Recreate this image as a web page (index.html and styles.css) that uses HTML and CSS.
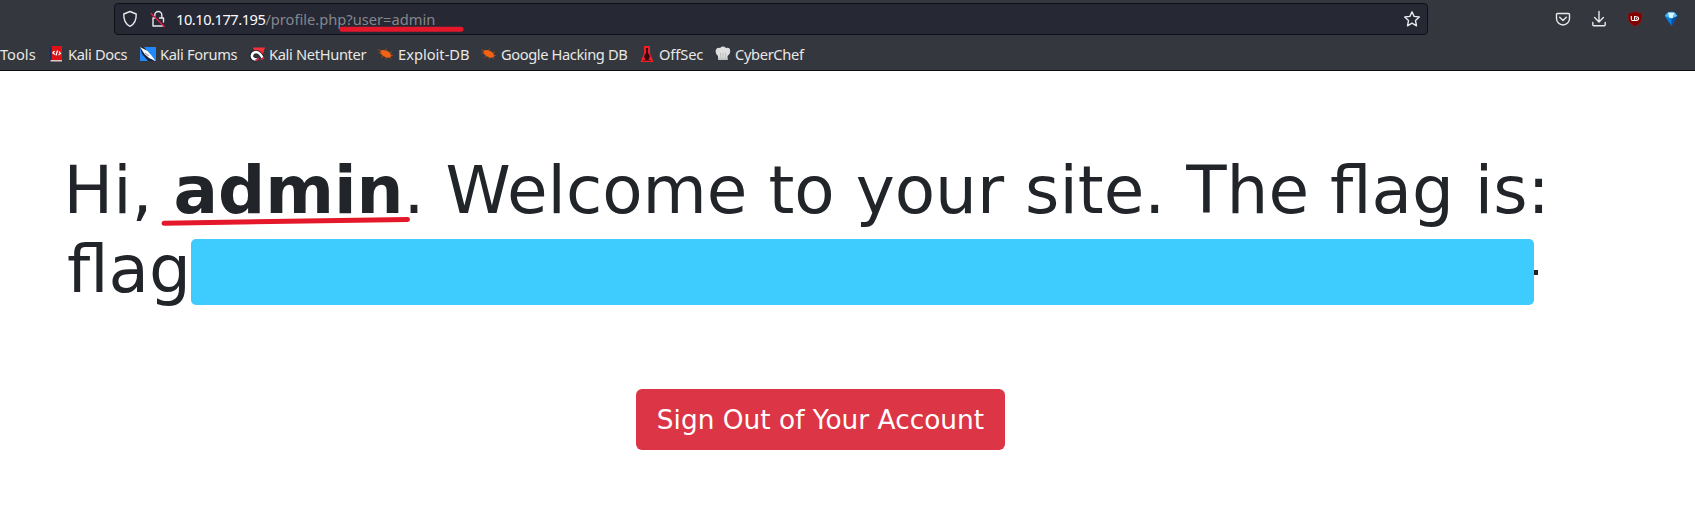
FILE: index.html
```html
<!DOCTYPE html>
<html lang="en">
<head>
<meta charset="utf-8">
<title>Profile</title>
<link rel="stylesheet" href="styles.css">
</head>
<body>
<header class="chrome">
  <div class="toolbar">
    <div class="address">
      <svg class="ic shield" viewBox="0 0 16 18" width="16" height="18"><path d="M8 1.5 L14.2 4 C14.4 9.5 13 14 8 16.3 C3 14 1.6 9.5 1.8 4 Z"/></svg>
      <svg class="ic lock" viewBox="0 0 16 18" width="16" height="18"><path d="M4.800 6V5a3.500 3.500 0 0 1 7 0v3M9.500 8h4v4M5 8H3v8h9.500"/><path class="slash" d="M1.2 3.500 L14.2 16.500"/></svg>
      <span class="url"><span class="host">10.10.177.195</span>/profile.php?user=admin<svg class="url-mark" width="126" height="7" viewBox="0 0 126 7"><path d="M3 3.3H122"/></svg></span>
      <svg class="ic star" viewBox="0 0 18 18" width="18" height="18"><path d="M9 1.8 L11.1 6.4 L16.300 7 L12.500 10.600 L13.500 15.800 L9 13.200 L4.500 15.800 L5.500 10.600 L1.700 7 L6.900 6.400 Z"/></svg>
    </div>
    <div class="actions">
      <svg class="ic" viewBox="0 0 16 18" width="16" height="18"><path d="M2.500 3.500h11a1 1 0 0 1 1 1v4a6.500 6.500 0 0 1-13 0v-4a1 1 0 0 1 1-1zM4.700 7.300L8 10.500l3.300-3.200"/></svg>
      <svg class="ic" viewBox="0 0 16 18" width="16" height="18"><path d="M8 1.500v10.300M3.600 7.500L8 11.900l4.400-4.400M1.800 12.500v2.200q0 1 1 1h10.400q1 0 1-1v-2.200"/></svg>
      <svg viewBox="0 0 16 18" width="16" height="18"><path d="M8 1.200Q11 3.300 15 3.300V9Q14.500 13.500 8 16.500Q1.500 13.500 1 9V3.300Q5 3.300 8 1.200Z" fill="#800000" stroke="#70292f" stroke-width=".7"/><path d="M4.300 6V9.100Q4.300 10.500 5.600 10.500H7.600V6M7.600 6.700H9.200Q11.600 6.700 11.600 8.600Q11.600 10.500 9.200 10.500H7.600M9 8.600h.9" fill="none" stroke="#fff" stroke-width="1.100"/></svg>
      <svg viewBox="0 0 16 18" width="16" height="18"><path d="M4.500 2.500L8 1.500L12 2.500L14.300 6L8.500 16L1.800 6Z" fill="#087fe8"/><path d="M1.800 6L4.500 2.500L6 7.500Z" fill="#38b9fc"/><path d="M5 2.500H11.500L9.500 8.500L6 7.500Z" fill="#e0f6ff"/><path d="M11.500 2.500L14.300 6L10 8Z" fill="#68c6fb"/><path d="M8.500 9L14.300 6L8.500 16Z" fill="#004e9d"/></svg>
    </div>
  </div>
  <nav class="bookmarks">
    <span class="bm tools">Tools</span>
    <span class="bm docs"><svg viewBox="0 0 16 16" width="16" height="16"><path d="M2 1h2v14H2z" fill="#152b58"/><path d="M3.500 0H14v14H3.500z" fill="#df1115"/><path d="M2.500 14h11.500v1.500H2.500z" fill="#e5c7c8"/><path d="M6.500 5L4.800 7L7 8.500M11 5.500L12.500 7.500L10.500 9M9.500 4.500L8 9.500" stroke="#fff" stroke-width="1.200" fill="none"/></svg>Kali Docs</span>
    <span class="bm forums"><svg viewBox="0 0 16 16" width="16" height="16"><path d="M0 1h16v14H0z" fill="#2088fa"/><path d="M0 1L4 1L14 15H8L2 8Z" fill="#17233d"/><path d="M0 1L7.500 5L11.500 9.500L15.500 15L9 12L4.500 8Z" fill="#fff"/><path d="M5 7L9 10" stroke="#88929e"/></svg>Kali Forums</span>
    <span class="bm hunter"><svg viewBox="0 0 16 16" width="16" height="16"><path d="M4 1.500h12L13 11L6 7Z" fill="#f6303a"/><path d="M7.500 13.500Q2.500 13.500 2.500 9.500Q3.500 6 7.500 6Q11 6.500 13.500 11.500" fill="none" stroke="#111620" stroke-width="4"/><path d="M8 13.500Q2.800 13.500 2.800 9.800Q3.500 6 7.500 6Q11 6.500 13.500 12" fill="none" stroke="#fff" stroke-width="2.600"/><path d="M6.500 14.500l3.500-2M12 13.500l3-2" stroke="#d72c48" stroke-width="2"/></svg>Kali NetHunter</span>
    <span class="bm exploit"><svg viewBox="0 0 16 16" width="16" height="16"><use href="#bug"/></svg>Exploit-DB</span>
    <span class="bm google"><svg viewBox="0 0 16 16" width="16" height="16"><g id="bug"><path d="M2.500 4.500Q6 3.300 9.500 5Q12.500 6.800 13.500 9.500Q13 12.500 9 11.700Q5 11 2.500 7.500Z" fill="#f16313"/><path d="M3 5L0 3.500M3.500 7L.5 7M7 5L8.500 2.500M11 6.500L14 6M12.500 9L15 9.500M5 9.500L3.500 12M8.500 11L8 13.500M12 11.500l1.500 1.500" stroke="#a84c1d" stroke-width=".8"/></g></svg>Google Hacking DB</span>
    <span class="bm offsec"><svg viewBox="0 0 16 16" width="16" height="16"><path d="M5 0h6v7l3.500 9H1.500L5 7Z" fill="#ed2027"/><path d="M7 2h2v5l2 3-1.500 4h-3L5 10l2-3Z" fill="#310a12"/><path d="M4 14.500h8" stroke="#811219"/></svg>OffSec</span>
    <span class="bm chef"><svg viewBox="0 0 16 16" width="16" height="16"><path d="M3 14V10Q0 8 .8 4Q2 1 5 2Q8-.8 11 2Q15 1 15.200 5Q15.500 8 12.500 10V14Z" fill="#dedede"/><path d="M3 11.500h9.500V14H3Z" fill="#c3c3c3"/><path d="M5.500 7v4M8 7v4M10.500 7v4" stroke="#bdbdbd"/></svg>CyberChef</span>
  </nav>
</header>
<main class="page">
  <h1 class="greeting">
    <span class="line first">Hi, <b class="name">admin<svg class="name-mark" width="250" height="10" viewBox="0 0 250 10"><path d="M3 7.200L246.500 3.500"/></svg></b>. Welcome to your site. The flag is:</span>
    <span class="line second">flag<span class="redaction"></span><span class="tail"></span></span>
  </h1>
  <a class="signout">Sign Out of Your Account</a>
</main>
</body>
</html>
```
FILE: styles.css
```css
* { box-sizing: border-box; }
body { margin: 0; height: 511px; overflow: hidden; background: #fff; color: #212529; font-family: "DejaVu Sans", sans-serif; }
.chrome { height: 71px; background: #34373e; border-bottom: 1px solid #0c0c0d; font-family: "Noto Sans", sans-serif; font-size: 14.67px; color: #e8e8e5; }
svg { display: block; flex: none; }
.ic { fill: none; stroke: #e9e9eb; stroke-width: 1.4; stroke-linejoin: round; stroke-linecap: round; }
.toolbar { display: flex; height: 37px; padding: 3px 16px 0 114px; justify-content: space-between; }
.address { display: flex; align-items: center; width: 1314px; height: 32px; padding: 0 6px 0 7px; background: #262833; border: 1px solid #0e1017; border-radius: 4px; }
.lock { margin-left: 12px; }
.lock .slash { stroke: #e2204b; stroke-width: 1.4; }
.url { position: relative; margin-left: 10px; color: #85868d; white-space: nowrap; }
.host { color: #fbfbfe; letter-spacing: -.48px; }
.url-mark { position: absolute; left: 163px; top: 17px; }
.url-mark path, .name-mark path { fill: none; stroke: #e5172b; stroke-width: 5; stroke-linecap: round; }
.star { margin-left: auto; }
.actions { display: flex; gap: 20px; height: 32px; align-items: center; }
.bookmarks { display: flex; height: 33px; align-items: center; padding-top: 0; }
.bm { display: flex; align-items: center; gap: 4px; white-space: nowrap; flex: none; letter-spacing: -.34px; }
.tools { width: 48px; letter-spacing: 0; }
.docs { width: 92px; }
.forums { width: 109px; }
.hunter { width: 129px; }
.exploit { width: 103px; letter-spacing: 0; }
.google { width: 158px; letter-spacing: -.4px; }
.offsec { width: 76px; letter-spacing: -.1px; }
.page { display: flex; flex-direction: column; align-items: flex-start; padding-top: 80px; }
.greeting { margin: 0; font-size: 66px; font-weight: 400; line-height: 79px; }
.line { display: flex; white-space: pre; }
.first { display: block; padding-left: 63.5px; }
.second { padding-left: 67px; }
.name { position: relative; }
.name-mark { position: absolute; left: -12px; top: 64px; }
.redaction { width: 1343px; height: 66px; margin: 9px 0 0 0; background: #3ecbfe; border-radius: 5px; }
.tail { width: 4px; height: 5px; margin-top: 40px; background: #212529; }
.signout { margin: 80px 0 0 636px; width: 369px; height: 61px; border-radius: 6px; background: #dc3545; color: #fff; font-size: 26.4px; line-height: 61px; text-align: center; white-space: nowrap; }
```
